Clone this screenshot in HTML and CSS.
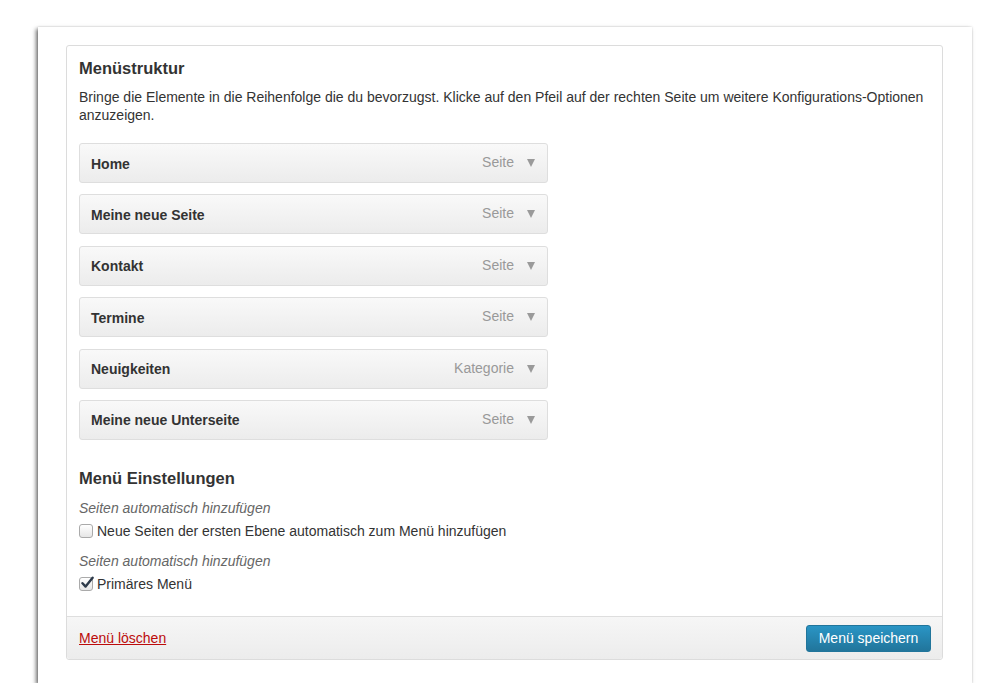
FILE: index.html
```html
<!DOCTYPE html>
<html lang="de">
<head>
<meta charset="utf-8">
<link rel="stylesheet" href="styles.css">
</head>
<body>
<div class="sheet">
  <div class="panel">
    <div class="panel-body">
      <h3 class="title">Menüstruktur</h3>
      <p class="desc">Bringe die Elemente in die Reihenfolge die du bevorzugst. Klicke auf den Pfeil auf der rechten Seite um weitere Konfigurations-Optionen anzuzeigen.</p>
      <ul class="items">
        <li class="item"><span class="name">Home</span><span class="type">Seite</span><span class="arrow"></span></li>
        <li class="item"><span class="name">Meine neue Seite</span><span class="type">Seite</span><span class="arrow"></span></li>
        <li class="item"><span class="name">Kontakt</span><span class="type">Seite</span><span class="arrow"></span></li>
        <li class="item"><span class="name">Termine</span><span class="type">Seite</span><span class="arrow"></span></li>
        <li class="item"><span class="name">Neuigkeiten</span><span class="type">Kategorie</span><span class="arrow"></span></li>
        <li class="item"><span class="name">Meine neue Unterseite</span><span class="type">Seite</span><span class="arrow"></span></li>
      </ul>
      <h3 class="title title2">Menü Einstellungen</h3>
      <div class="setting">
        <div class="label">Seiten automatisch hinzufügen</div>
        <label class="check"><span class="box"></span>Neue Seiten der ersten Ebene automatisch zum Menü hinzufügen</label>
      </div>
      <div class="setting">
        <div class="label">Seiten automatisch hinzufügen</div>
        <label class="check"><span class="box checked"><svg viewBox="0 0 14 14" width="14" height="14"><path d="M2.5 7.2 L5.6 10.6 L12.6 1.8" fill="none" stroke="#2d3a4a" stroke-width="2.4" stroke-linecap="round" stroke-linejoin="round"/></svg></span>Primäres Menü</label>
      </div>
    </div>
    <div class="panel-foot">
      <a class="delete" href="#">Menü löschen</a>
      <button class="save">Menü speichern</button>
    </div>
  </div>
</div>
</body>
</html>
```
FILE: styles.css
```css
html, body {
  margin: 0;
  padding: 0;
  background: #ffffff;
}
body {
  font-family: "Liberation Sans", Arial, sans-serif;
  color: #333;
  padding: 27px 0 0 38px;
}
.sheet {
  width: 934px;
  height: 656px;
  box-sizing: border-box;
  background: #fff;
  padding: 18px 28px 0 28px;
  box-shadow: -2px 2px 4px rgba(0,0,0,0.55), 0 0 2px rgba(0,0,0,0.15);
}
.panel {
  width: 877px;
  height: 615px;
  box-sizing: border-box;
  border: 1px solid #dcdcdc;
  border-radius: 3px;
  display: flex;
  flex-direction: column;
}
.panel-body {
  flex: 1;
  padding: 12px 12px 0 12px;
}
.title {
  margin: 0;
  font-size: 16.5px;
  font-weight: bold;
  color: #333;
  line-height: 20px;
}
.desc {
  margin: 10px 0 0 0;
  font-size: 14px;
  line-height: 18px;
  color: #333;
}
.items {
  list-style: none;
  margin: 19px 0 0 0;
  padding: 0;
  display: flex;
  flex-direction: column;
  gap: 11.4px;
}
.item {
  width: 469px;
  height: 40px;
  box-sizing: border-box;
  border: 1px solid #dedede;
  border-radius: 3px;
  background: linear-gradient(#f9f9f9, #ececec);
  display: flex;
  align-items: center;
  padding: 0 12px 0 11px;
  font-size: 14px;
}
.item .name {
  font-weight: bold;
  color: #333;
  flex: 1;
  padding-top: 1px;
}
.item .type {
  color: #999;
  font-size: 14px;
  margin-top: -2px;
}
.item .arrow {
  width: 0;
  height: 0;
  border-left: 4.5px solid transparent;
  border-right: 4.5px solid transparent;
  border-top: 8px solid #9a9a9a;
  margin-left: 13px;
}
.title2 {
  margin-top: 28px;
}
.setting {
  margin-top: 12px;
}
.setting + .setting {
  margin-top: 14px;
}
.label {
  font-style: italic;
  color: #666;
  font-size: 14px;
  line-height: 16px;
}
.check {
  display: flex;
  align-items: center;
  font-size: 14px;
  line-height: 16px;
  color: #333;
  margin-top: 7px;
}
.box {
  width: 12px;
  height: 12px;
  border: 1px solid #aaa;
  border-radius: 3px;
  background: linear-gradient(#fff, #e6e6e6);
  margin-right: 4px;
  position: relative;
  flex: none;
}
.box svg {
  position: absolute;
  left: 0px;
  top: -2px;
}
.panel-foot {
  height: 43px;
  box-sizing: border-box;
  border-top: 1px solid #dedede;
  background: linear-gradient(#f6f6f6, #ececec);
  display: flex;
  align-items: center;
  justify-content: space-between;
  padding: 0 11px 0 12px;
  border-radius: 0 0 3px 3px;
}
.delete {
  color: #bc0b0b;
  font-size: 14px;
  text-decoration: underline;
}
.save {
  font-family: "Liberation Sans", Arial, sans-serif;
  font-size: 14px;
  color: #fff;
  width: 125px;
  height: 27px;
  border: 1px solid #21759b;
  border-radius: 3px;
  background: linear-gradient(#2a95c5, #21759b);
  padding: 0;
}
```
